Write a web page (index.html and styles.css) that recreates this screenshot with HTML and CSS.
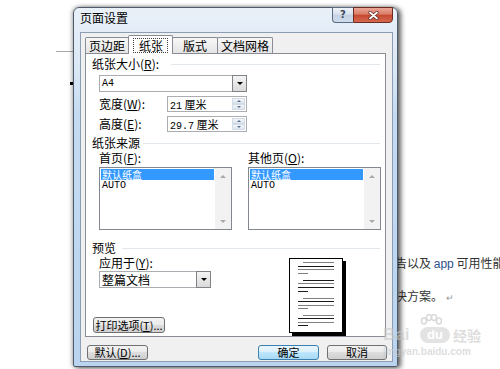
FILE: index.html
```html
<!DOCTYPE html>
<html>
<head>
    <meta charset="utf-8">
    <title>页面设置</title>
    <link rel="stylesheet" href="styles.css">
</head>
<body>
    <div class="doc">
        <div class="doc-rule"></div>
        <div class="doc-bullet"></div>
        <p class="doc-line line-1">告以及 <span class="doc-latin">app</span> 可用性能测试</p>
        <p class="doc-line line-2">决方案。<span class="doc-mark">↵</span></p>
    </div>

    <div class="dialog">
        <div class="titlebar">
            <span class="title">页面设置</span>
            <div class="caption">
                <span class="cap-help">?</span>
                <span class="cap-close">
                    <svg width="11" height="9" viewBox="0 0 11 9">
                        <path d="M2 1.5 L9 7.5 M9 1.5 L2 7.5" stroke="#5a2a22" stroke-width="3.2" stroke-linecap="round"/>
                        <path d="M2 1.5 L9 7.5 M9 1.5 L2 7.5" stroke="#fff" stroke-width="1.8" stroke-linecap="round"/>
                    </svg>
                </span>
            </div>
        </div>

        <div class="client">
            <div class="tabs">
                <span class="tab tab-margins">页边距</span>
                <span class="tab tab-paper selected"><span class="focus">纸张</span></span>
                <span class="tab tab-layout">版式</span>
                <span class="tab tab-grid">文档网格</span>
            </div>

            <div class="panel">
                <div class="group-head">纸张大小(<u>R</u>):<span class="rule rule-size"></span></div>
                <div class="select size-select">
                    <span class="value mono">A4</span>
                    <span class="drop"></span>
                </div>
                <div class="spin-row">
                    <span>宽度(<u>W</u>):</span>
                    <div class="spin">
                        <span class="value"><span class="mono">21</span> 厘米</span>
                        <span class="arrows"><span class="up"></span><span class="down"></span></span>
                    </div>
                </div>
                <div class="spin-row second">
                    <span>高度(<u>E</u>):</span>
                    <div class="spin">
                        <span class="value"><span class="mono">29.7</span> 厘米</span>
                        <span class="arrows"><span class="up"></span><span class="down"></span></span>
                    </div>
                </div>

                <div class="group-head source-head">纸张来源<span class="rule rule-source"></span></div>
                <div class="source">
                    <span>首页(<u>F</u>):</span>
                    <span>其他页(<u>O</u>):</span>
                    <div class="listbox">
                        <div class="items">
                            <div class="item sel">默认纸盒</div>
                            <div class="item mono">AUTO</div>
                        </div>
                        <div class="scroll"><span class="arr up"></span><span class="arr down"></span></div>
                    </div>
                    <div class="listbox">
                        <div class="items">
                            <div class="item sel">默认纸盒</div>
                            <div class="item mono">AUTO</div>
                        </div>
                        <div class="scroll"><span class="arr up"></span><span class="arr down"></span></div>
                    </div>
                </div>

                <div class="group-head preview-head">预览<span class="rule rule-preview"></span></div>
                <div class="preview">
                    <div class="apply">
                        <span class="apply-label">应用于(<u>Y</u>):</span>
                        <div class="select apply-select">
                            <span class="value">整篇文档</span>
                            <span class="drop"></span>
                        </div>
                        <button class="btn btn-print">打印选项(<u>T</u>)...</button>
                    </div>
                    <svg class="page" width="57" height="78" viewBox="0 0 57 78">
                        <rect x="3" y="3" width="54" height="75" fill="#000"/>
                        <rect x="0.5" y="0.5" width="53" height="74" fill="#fff" stroke="#000"/>
                        <g stroke-width="1">
                            <path d="M14 4.5 H45" stroke="#808080"/>
                            <path d="M9 8.5 H45" stroke="#1a1a1a"/>
                            <path d="M9 11.5 H45" stroke="#808080"/>
                            <path d="M9 15.5 H19" stroke="#808080"/>
                            <path d="M14 22.5 H45" stroke="#1a1a1a"/>
                            <path d="M9 25.5 H45" stroke="#808080"/>
                            <path d="M9 29.5 H45" stroke="#1a1a1a"/>
                            <path d="M9 33.5 H19" stroke="#1a1a1a"/>
                            <path d="M14 40.5 H45" stroke="#808080"/>
                            <path d="M9 43.5 H45" stroke="#1a1a1a"/>
                            <path d="M9 47.5 H45" stroke="#808080"/>
                            <path d="M9 50.5 H19" stroke="#808080"/>
                            <path d="M14 57.5 H45" stroke="#808080"/>
                            <path d="M9 60.5 H45" stroke="#1a1a1a"/>
                            <path d="M9 64.5 H45" stroke="#808080"/>
                            <path d="M9 67.5 H19" stroke="#1a1a1a"/>
                        </g>
                    </svg>
                </div>
            </div>

            <div class="footer">
                <button class="btn btn-reset">默认(<u>D</u>)...</button>
                <button class="btn btn-ok">确定</button>
                <button class="btn btn-cancel">取消</button>
            </div>
        </div>
    </div>

    <div class="watermark">
        <svg class="wm-paw" width="22" height="13" viewBox="0 0 22 13">
            <g fill="none" stroke="#c8c8c8" stroke-width="1.5">
                <ellipse cx="4" cy="7" rx="2.5" ry="3"/>
                <ellipse cx="9" cy="3.5" rx="2.5" ry="3"/>
                <ellipse cx="14" cy="3.5" rx="2.5" ry="3"/>
                <ellipse cx="19" cy="7" rx="2.5" ry="3"/>
            </g>
        </svg>
        <div class="wm-logo"><span class="wm-bai">Bai</span><span class="wm-du">du</span><span class="wm-jy">经验</span></div>
        <div class="wm-url">jingyan.baidu.com</div>
    </div>
</body>
</html>
```

FILE: styles.css
```css
* {
    box-sizing: border-box;
}
body {
    margin: 0;
    width: 500px;
    height: 369px;
    overflow: hidden;
    position: relative;
    background: #fff;
    font-family: "Noto Sans CJK SC", "Noto Sans", sans-serif;
    font-size: 12px;
    color: #000;
}
u {
    text-decoration: underline;
}
.mono {
    font-family: "Liberation Mono", "Noto Sans CJK SC", monospace;
    font-size: 10px;
}

/* document behind the dialog */
.doc {
    padding-top: 51px;
}
.doc-rule {
    height: 1px;
    width: 140px;
    margin-left: 56px;
    background: #a8a8a8;
}
.doc-bullet {
    width: 3px;
    height: 3px;
    margin: 30px 0 0 70px;
    background: #000;
}
.doc-line {
    margin: 0;
    padding-left: 395px;
    height: 14px;
    line-height: 14px;
    white-space: nowrap;
    overflow: hidden;
    color: #333;
}
.line-1 {
    margin-top: 171px;
}
.line-2 {
    margin-top: 19px;
}
.doc-latin {
    font-family: "Liberation Sans", sans-serif;
    color: #2b4f8c;
}
.doc-mark {
    color: #999;
    font-size: 9px;
    margin-left: 3px;
}

/* dialog window */
.dialog {
    position: absolute;
    left: 73px;
    top: 7px;
    width: 325px;
    height: 360px;
    display: flex;
    flex-direction: column;
    padding: 0 4px 4px 6px;
    border: 1px solid #4e5b6d;
    border-radius: 6px 6px 2px 2px;
    background: linear-gradient(to bottom, #e9f0f8 0, #dae7f5 18%, #c4dbf2 30%, #bad4ef 100%);
    box-shadow: 3px 1px 5px rgba(0, 0, 0, .6), -1px 0 4px rgba(0, 0, 0, .3);
}
.titlebar {
    height: 24px;
    display: flex;
    justify-content: space-between;
    align-items: flex-start;
}
.title {
    padding-top: 3px;
    line-height: 14px;
}
.caption {
    display: flex;
    height: 16px;
    margin-top: -1px;
}
.cap-help {
    width: 21px;
    border: 1px solid #5b6b82;
    border-right: none;
    border-radius: 0 0 0 4px;
    background: linear-gradient(to bottom, #eef2f8 0, #d9e2ee 45%, #c3d1e3 50%, #cfdced 100%);
    color: #3a4658;
    font-family: "DejaVu Sans", sans-serif;
    font-size: 10px;
    font-weight: bold;
    line-height: 14px;
    text-align: center;
}
.cap-close {
    width: 40px;
    border: 1px solid #6a2b21;
    border-radius: 0 0 4px 0;
    background: linear-gradient(to bottom, #eaa898 0, #d97b66 45%, #c5482f 50%, #d5684f 100%);
    display: flex;
    align-items: center;
    justify-content: center;
}

.client {
    flex: 1;
    background: #f0f0f0;
    border: 1px solid #8d9db3;
    padding: 2px 6px 0 4px;
    display: flex;
    flex-direction: column;
}

/* tabs */
.tabs {
    display: flex;
    align-items: flex-end;
    height: 18px;
}
.tab {
    height: 16px;
    line-height: 15px;
    text-align: center;
    border: 1px solid #898c95;
    border-bottom: none;
    border-radius: 2px 2px 0 0;
    background: linear-gradient(to bottom, #f8f8f8, #e4e4e4);
    margin-left: -1px;
}
.tab-margins {
    width: 44px;
    margin-left: 0;
}
.tab-paper {
    width: 45px;
}
.tab-layout {
    width: 46px;
}
.tab-grid {
    width: 56px;
}
.tab.selected {
    height: 19px;
    margin-bottom: -1px;
    padding-top: 2px;
    background: #fff;
    position: relative;
    z-index: 1;
}
.focus {
    display: inline-block;
    line-height: 13px;
    padding: 0 4px 0 5px;
    outline: 1px dotted #444;
}

/* panel */
.panel {
    height: 284px;
    background: #fff;
    border: 1px solid #898c95;
    padding: 3px 5px 0 6px;
    display: flex;
    flex-direction: column;
}
.group-head {
    display: flex;
    align-items: center;
    height: 14px;
    line-height: 14px;
}
.rule {
    flex: 1;
    height: 1px;
    background: #e2e7ee;
}
.rule-size {
    margin-left: 12px;
}
.rule-source {
    margin-left: 3px;
}
.rule-preview {
    margin-left: 6px;
}
.source-head {
    margin-top: 5px;
}
.preview-head {
    margin-top: 11px;
}

.select {
    display: flex;
    height: 17px;
    border: 1px solid #abadb3;
    background: #fff;
}
.select .value {
    flex: 1;
    padding-left: 2px;
    line-height: 15px;
}
.select .drop {
    width: 15px;
    margin: -1px -1px -1px 0;
    border: 1px solid #7f8287;
    background: linear-gradient(to bottom, #f4f4f4, #dadada);
    display: flex;
    align-items: center;
    justify-content: center;
}
.select .drop::after {
    content: "";
    border-left: 3px solid transparent;
    border-right: 3px solid transparent;
    border-top: 3px solid #000;
}
.size-select {
    width: 148px;
    margin: 4px 0 0 7px;
}

.spin-row {
    display: grid;
    grid-template-columns: 68px 80px;
    align-items: center;
    height: 16px;
    margin: 3px 0 0 7px;
}
.spin-row.second {
    margin-top: 4px;
}
.spin {
    display: flex;
    height: 16px;
    border: 1px solid #abadb3;
}
.spin .value {
    flex: 1;
    padding-left: 2px;
    line-height: 14px;
    font-size: 11px;
}
.spin .arrows {
    width: 13px;
    margin: 1px 1px 1px 0;
    display: flex;
    flex-direction: column;
}
.spin .up,
.spin .down {
    flex: 1;
    background: linear-gradient(to bottom, #f3f6fa, #dce4ee);
    border: 1px solid #d3dbe6;
    display: flex;
    align-items: center;
    justify-content: center;
}
.spin .up::after {
    content: "";
    border-left: 2px solid transparent;
    border-right: 2px solid transparent;
    border-bottom: 2px solid #5b6f8f;
}
.spin .down::after {
    content: "";
    border-left: 2px solid transparent;
    border-right: 2px solid transparent;
    border-top: 2px solid #5b6f8f;
}

/* paper source lists */
.source {
    display: grid;
    grid-template-columns: 133px 133px;
    column-gap: 16px;
    row-gap: 2px;
    margin: 1px 0 0 7px;
    line-height: 14px;
}
.listbox {
    height: 63px;
    border: 1px solid #828790;
    display: grid;
    grid-template-columns: 1fr 16px;
}
.items {
    padding: 1px;
}
.item {
    height: 11px;
    line-height: 11px;
    font-size: 10px;
    padding-left: 1px;
    overflow: hidden;
}
.item.sel {
    background: #3399ff;
    color: #fff;
}
.scroll {
    background: #f2f2f2;
    display: flex;
    flex-direction: column;
    justify-content: space-between;
}
.arr {
    height: 16px;
    display: flex;
    align-items: center;
    justify-content: center;
}
.arr.up::after {
    content: "";
    border-left: 3px solid transparent;
    border-right: 3px solid transparent;
    border-bottom: 3px solid #a9a9a9;
}
.arr.down::after {
    content: "";
    border-left: 3px solid transparent;
    border-right: 3px solid transparent;
    border-top: 3px solid #a9a9a9;
}

/* preview */
.preview {
    flex: 1;
    display: flex;
    margin-top: 1px;
}
.apply {
    width: 197px;
    display: flex;
    flex-direction: column;
}
.apply-label {
    line-height: 14px;
    margin-left: 7px;
}
.apply-select {
    width: 112px;
    margin: 1px 0 0 7px;
}
.page {
    display: block;
    margin-top: 2px;
}

/* buttons */
.btn {
    height: 16px;
    padding: 0;
    border: 1px solid #707070;
    border-radius: 3px;
    background: linear-gradient(to bottom, #f2f2f2 0, #ebebeb 50%, #dddddd 50%, #cfcfcf 100%);
    font-family: "Noto Sans CJK SC", sans-serif;
    font-size: 11px;
    line-height: 13px;
    color: #000;
    text-align: center;
    white-space: nowrap;
}
.btn-print {
    width: 72px;
    margin: auto 0 3px 1px;
}
.footer {
    display: flex;
    height: 15px;
    margin-top: 8px;
}
.footer .btn {
    height: 15px;
}
.btn-reset {
    width: 61px;
    margin-left: 2px;
}
.btn-ok {
    width: 61px;
    margin-left: auto;
    border-color: #3c7fb1;
    background: linear-gradient(to bottom, #eaf6fd 0, #d9f0fc 50%, #bee6fd 50%, #a7d9f5 100%);
}
.btn-cancel {
    width: 60px;
    margin-left: 8px;
    margin-right: -1px;
}

/* watermark on top of the screenshot */
.watermark {
    position: absolute;
    left: 383px;
    top: 314px;
    opacity: .7;
    color: rgba(200, 200, 200, .85);
}
.wm-paw {
    display: block;
    margin-left: 37px;
}
.wm-logo {
    display: flex;
    align-items: center;
    height: 16px;
}
.wm-bai {
    font-family: "Liberation Sans", sans-serif;
    font-size: 17px;
    font-weight: bold;
    width: 37px;
}
.wm-du {
    width: 30px;
    height: 16px;
    border-radius: 8px;
    background: rgba(200, 200, 200, .7);
    color: #fff;
    font-family: "Liberation Sans", sans-serif;
    font-size: 13px;
    font-weight: bold;
    line-height: 16px;
    text-align: center;
}
.wm-jy {
    margin-left: 3px;
    font-size: 14px;
    font-weight: bold;
}
.wm-url {
    margin-top: 3px;
    font-family: "Liberation Sans", sans-serif;
    font-size: 10px;
    font-weight: bold;
    line-height: 11px;
}
```
